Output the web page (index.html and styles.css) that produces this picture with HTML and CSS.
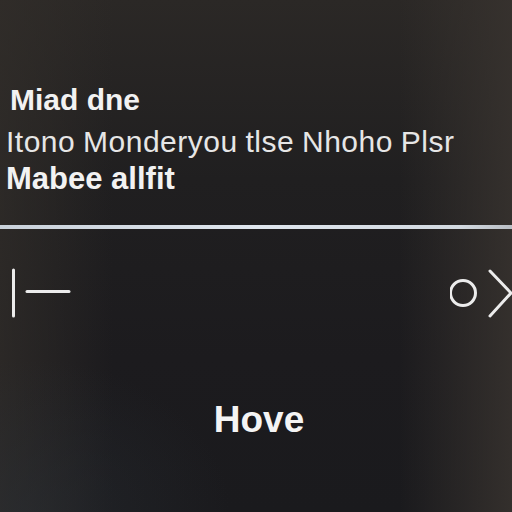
FILE: index.html
```html
<!DOCTYPE html>
<html lang="en">
    <head>
        <meta charset="utf-8"/>
        <meta name="viewport" content="width=device-width, initial-scale=1.0"/>
        <title>Hove</title>
        <link rel="stylesheet" href="styles.css">
    </head>
    <body>
        <main class="screen">
            <section class="copy">
                <h1 class="title">Miad dne</h1>
                <p class="lead">Itono Monderyou tlse Nhoho Plsr</p>
                <h2 class="sub">Mabee allfit</h2>
            </section>

            <hr class="rule">

            <div class="controls">
                <svg class="icon-left" width="62" height="50" viewBox="0 0 62 50">
                    <line x1="3.5" y1="2" x2="3.5" y2="48"/>
                    <line x1="17" y1="23.5" x2="59" y2="23.5"/>
                </svg>
                <svg class="icon-right" width="62" height="50" viewBox="0 0 62 50">
                    <circle cx="13" cy="25" r="12.5"/>
                    <polyline points="40,3 61,25 40,48"/>
                </svg>
            </div>

            <div class="action">Hove</div>
        </main>
    </body>
</html>
```

FILE: styles.css
```css
*{margin:0;padding:0;box-sizing:border-box;}

html, body{
    height: 100%;
}

body{
    font-family: "Liberation Sans", Arial, sans-serif;
    color: #eeeeee;
    background:
        radial-gradient(ellipse 40% 30% at 5% 100%, rgba(42,47,53,.5), transparent),
        linear-gradient(90deg, rgba(50,46,42,.7) 0%, rgba(30,29,31,0) 22%, rgba(30,29,31,0) 78%, rgba(56,51,47,.85) 100%),
        linear-gradient(180deg, #2b2826 0%, #201f20 35%, #1c1b1e 70%, #1a1a1d 100%);
}

.screen{
    display: flex;
    flex-direction: column;
    padding-top: 83px;
}

.copy{
    display: flex;
    flex-direction: column;
    padding-left: 6px;
}

.title{
    font-size: 30px;
    font-weight: 700;
    line-height: 34px;
    margin-left: 4px;
    color: #f2f2f2;
}

.lead{
    margin-top: 8px;
    font-size: 30px;
    line-height: 34px;
    color: #e6e6e6;
    letter-spacing: 0.5px;
    word-spacing: -1px;
}

.sub{
    margin-top: 3px;
    font-size: 31px;
    font-weight: 700;
    line-height: 34px;
    color: #f2f2f2;
}

.rule{
    margin-top: 29px;
    height: 4px;
    border: none;
    background: linear-gradient(90deg, #c9d1da 0%, #dfe6ee 50%, #d2d9e0 90%, #b9bec4 100%);
}

.controls{
    display: flex;
    justify-content: space-between;
    align-items: center;
    margin-top: 39px;
    padding-left: 10px;
}

.controls svg{
    display: block;
    fill: none;
    stroke: #ececec;
    stroke-width: 3;
    stroke-linecap: round;
}

.icon-right polyline{
    stroke-linejoin: miter;
}

.action{
    margin-top: 81px;
    padding-left: 6px;
    text-align: center;
    font-size: 37px;
    font-weight: 700;
    line-height: 41px;
    color: #f4f4f4;
}
```
